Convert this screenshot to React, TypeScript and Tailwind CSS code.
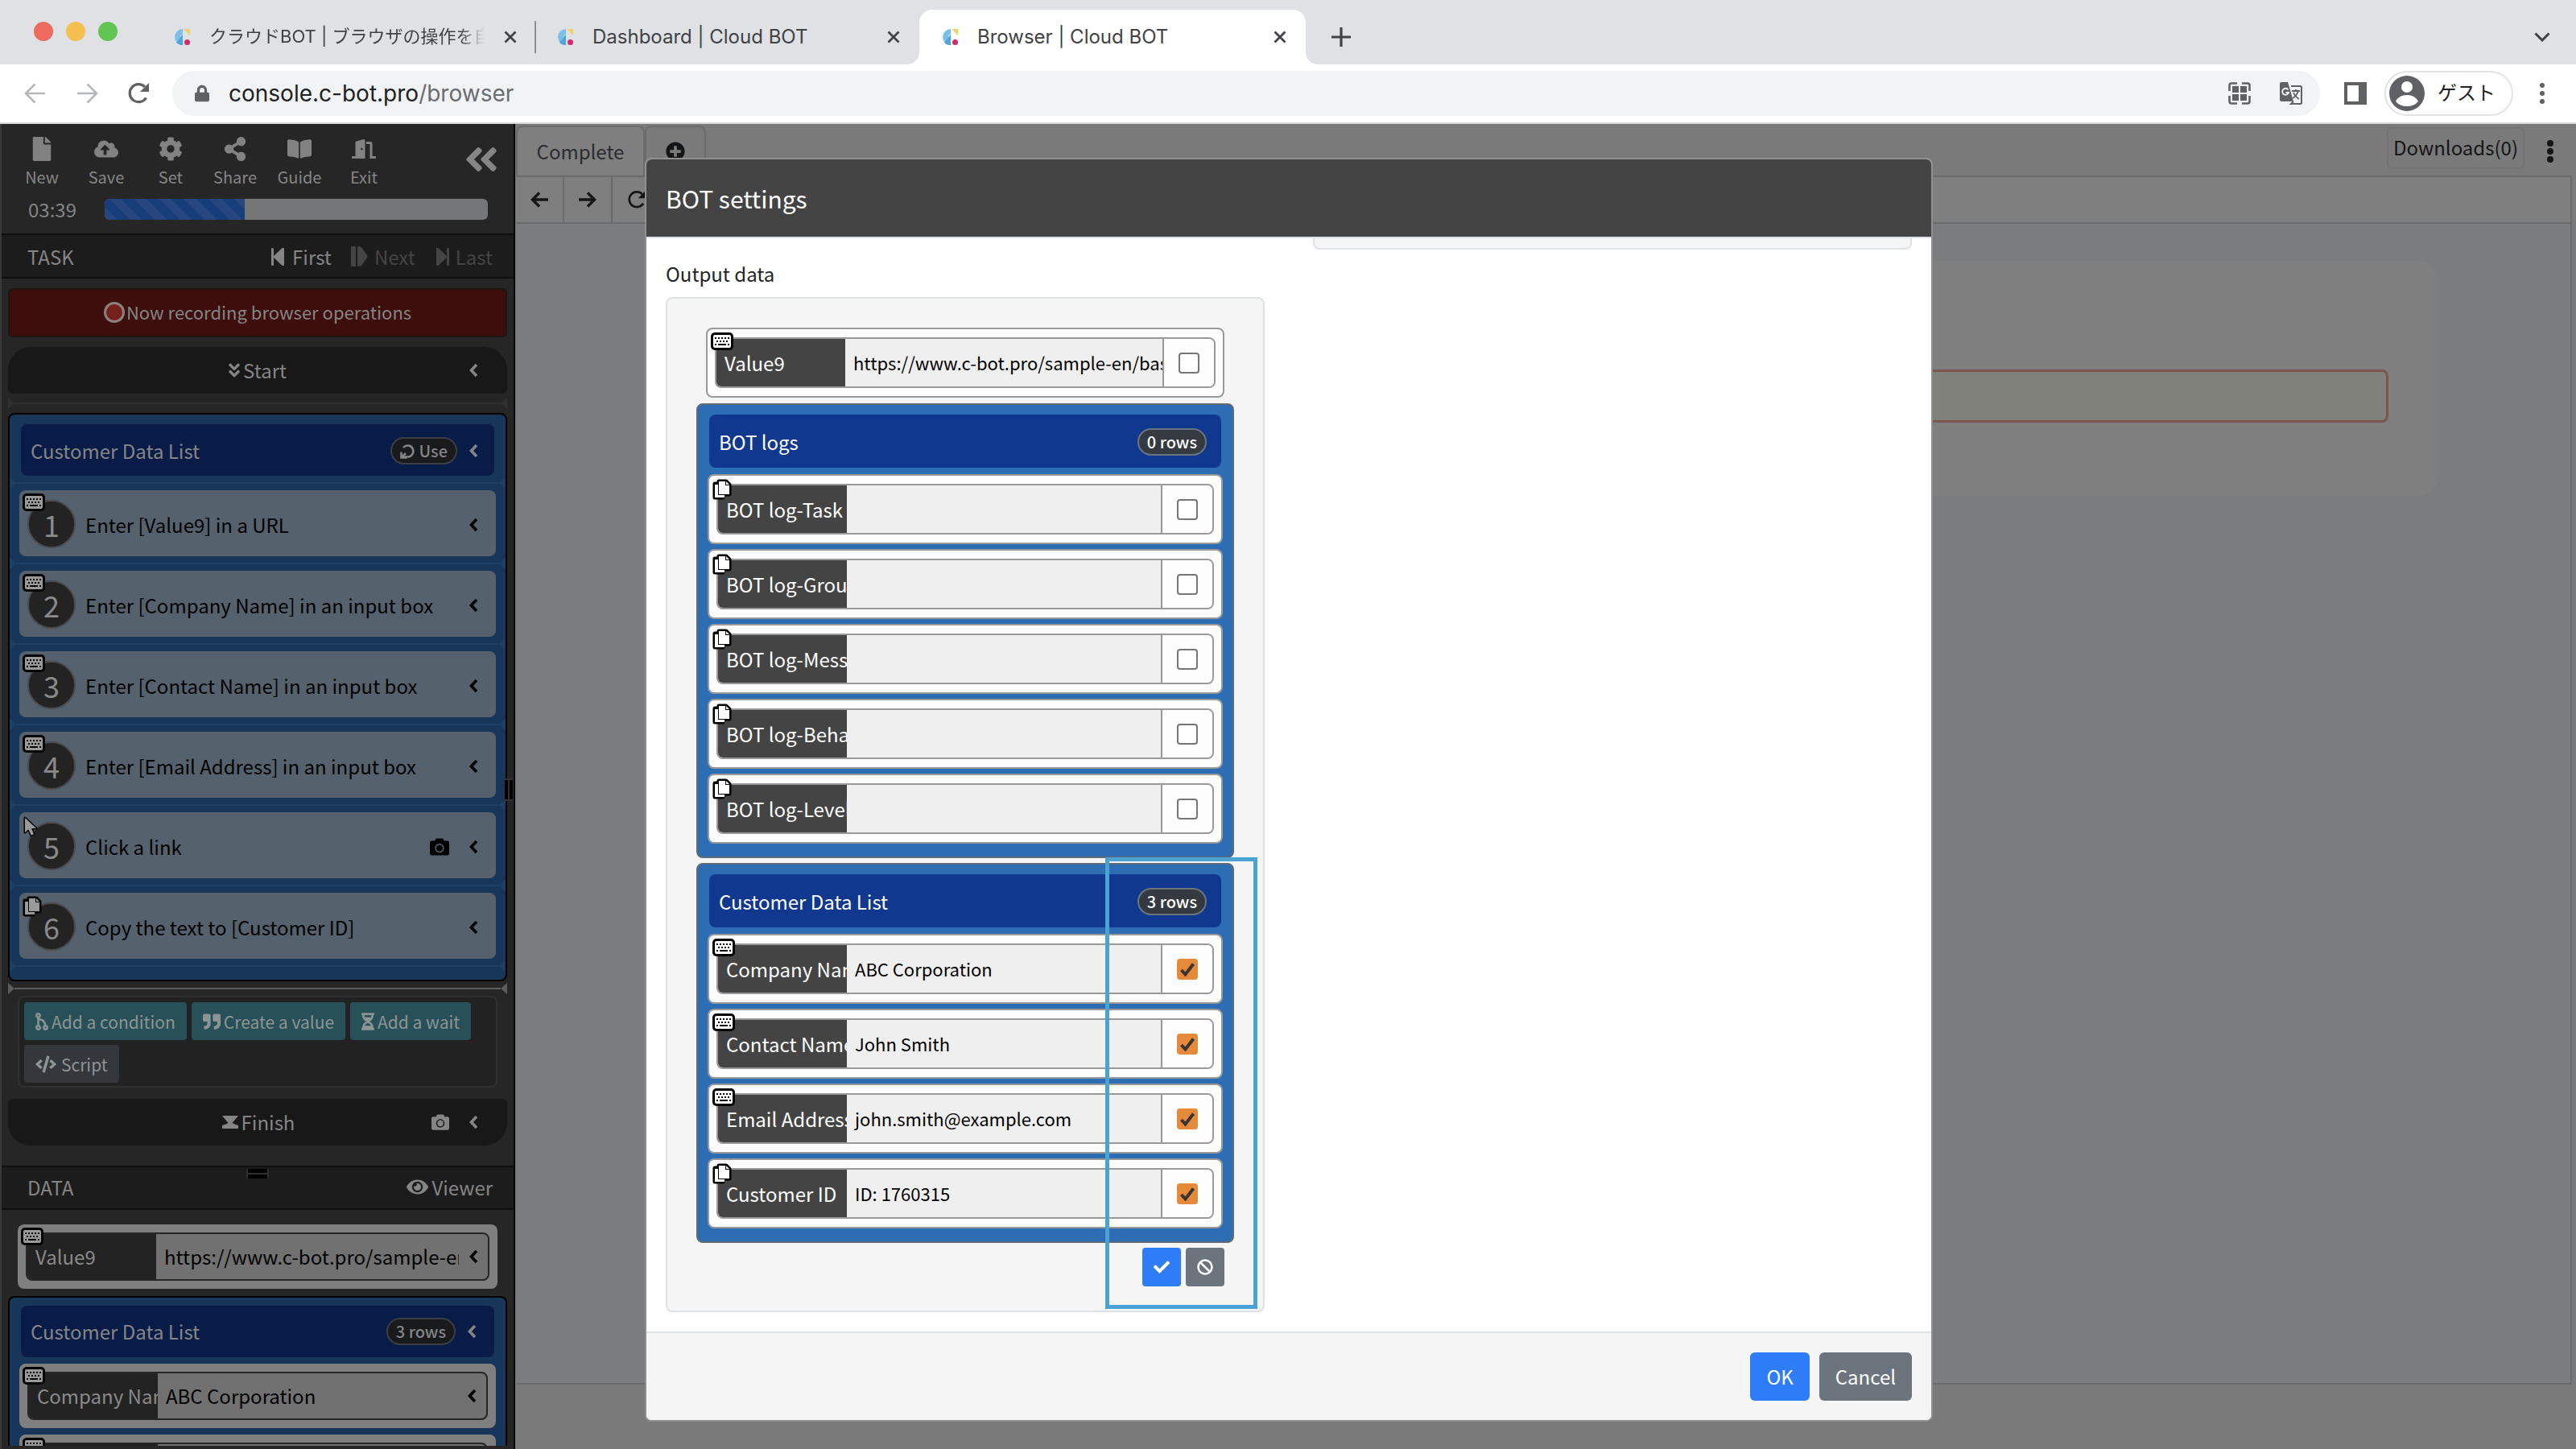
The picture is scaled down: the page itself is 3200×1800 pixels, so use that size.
import React from "react";
import {
  FaAngleDoubleDown,
  FaAngleDoubleLeft,
  FaBan,
  FaBookOpen,
  FaCamera,
  FaCheck,
  FaCloudUploadAlt,
  FaCode,
  FaCog,
  FaDoorOpen,
  FaEye,
  FaFile,
  FaHourglassHalf,
  FaLock,
  FaPlusCircle,
  FaQuoteRight,
  FaShareAlt,
} from "react-icons/fa";

/* ---------- Small drawings ---------- */

function Favicon() {
  return (
    <svg viewBox="0 0 20 20" className="size-5 shrink-0" aria-hidden="true">
      <path d="M11 0A10 10 0 0 0 11 20V13.5A3.6 3.6 0 0 1 11 6.5Z" fill="#7cc0e8" />
      <path d="M11 6.5L3 17A10 10 0 0 0 11 20Z" fill="#4fa5dc" />
      <path d="M12 0H20V8Z" fill="#f3cf6b" />
      <circle cx="16.5" cy="16.5" r="3.5" fill="#d42a6b" />
    </svg>
  );
}

function CloseIcon() {
  return (
    <svg viewBox="0 0 16 16" className="size-4" aria-hidden="true">
      <path d="M1.5 1.5L14.5 14.5M14.5 1.5L1.5 14.5" stroke="#414246" strokeWidth="2.8" fill="none" />
    </svg>
  );
}

function KeyboardIcon() {
  return (
    <svg viewBox="0 0 28 22" className="h-[22px] w-7" aria-hidden="true">
      <rect x="0" y="0" width="28" height="22" rx="5" fill="#000" />
      <rect x="3" y="3" width="22" height="16" rx="2" fill="currentColor" />
      <g fill="#000">
        <path d="M5 6h2v2H5zM9 6h2v2H9zM13 6h2v2h-2zM17 6h2v2h-2zM21 6h2v2h-2z" />
        <path d="M7 10h2v2H7zM11 10h2v2h-2zM15 10h2v2h-2zM19 10h2v2h-2z" />
        <path d="M5 14h2v2H5zM9 14h10v2H9zM21 14h2v2h-2z" />
      </g>
    </svg>
  );
}

function CopyIcon() {
  return (
    <svg viewBox="0 0 24 26" className="h-[26px] w-6" aria-hidden="true">
      <path d="M3 6h10v17H3z" fill="#000" stroke="#000" strokeWidth="5" strokeLinejoin="round" />
      <path d="M8 3h9l4 4v12H8z" fill="#000" stroke="#000" strokeWidth="5" strokeLinejoin="round" />
      <path d="M3 7h4v13h8v3H3z" fill="currentColor" />
      <path d="M8 3h8v5h5v11H8z" fill="currentColor" />
      <path d="M17 3l4 4h-4z" fill="currentColor" />
    </svg>
  );
}

function PointerIcon() {
  return (
    <svg viewBox="0 0 20 28" className="h-7 w-5" aria-hidden="true">
      <path
        d="M3 3V21L7.4 17.2L10.6 24.6L14 23.2L11 16H17Z"
        fill="currentColor"
        stroke="#000"
        strokeWidth="3"
        paintOrder="stroke"
        strokeLinejoin="round"
      />
    </svg>
  );
}

function Chevron() {
  return (
    <svg viewBox="0 0 12 18" className="h-[18px] w-3 shrink-0" aria-hidden="true">
      <path d="M10 2L3.5 9L10 16" fill="none" stroke="currentColor" strokeWidth="3.6" />
    </svg>
  );
}

function SkipIcon({ className }: { className?: string }) {
  return (
    <svg viewBox="0 0 16 22" className={"h-[22px] w-4 " + (className ?? "")} aria-hidden="true">
      <path d="M0 1Q0 0 1.5 0T3 1V10L13 .5Q16-1 16 1V21Q16 23 13 21.500L3 12V21Q3 22 1.500 22T0 21Z" fill="currentColor" />
    </svg>
  );
}

function NextIcon() {
  return (
    <svg viewBox="0 0 21 26" className="h-[26px] w-[21px]" aria-hidden="true">
      <rect x="0" y="0" width="6" height="25" rx="1" fill="currentColor" />
      <path d="M8 1Q8 0 10 0L13 1L20 11Q21 12.500 20 14L13 24L10 25Q8 25 8 24Z" fill="currentColor" />
    </svg>
  );
}

function BranchIcon() {
  return (
    <svg viewBox="0 0 16 22" className="h-[22px] w-4" fill="none" stroke="currentColor" strokeWidth="2.4" aria-hidden="true">
      <circle cx="3.500" cy="3.500" r="2.200" />
      <circle cx="3.500" cy="18.500" r="2.200" />
      <circle cx="12.500" cy="18.500" r="2.200" />
      <path d="M3.500 6V16M3.500 8Q11 8 12.500 16" />
    </svg>
  );
}

function LoopIcon() {
  return (
    <svg viewBox="0 0 20 20" className="size-5" fill="none" stroke="currentColor" strokeWidth="2.600" aria-hidden="true">
      <path d="M4 6A7 7 0 1 1 9 17.500H3" />
      <path d="M1.500 11.500V18.500H8.500M1.500 18.500L7 13" />
    </svg>
  );
}

function ArrowIcon({ flip }: { flip?: boolean }) {
  return (
    <svg viewBox="0 0 22 20" className={flip ? "h-5 w-[22px] rotate-180" : "h-5 w-[22px]"} aria-hidden="true">
      <path d="M11 1.500L2.500 10L11 18.500M2.500 10H22" fill="none" stroke="currentColor" strokeWidth="3.400" />
    </svg>
  );
}

function ThinArrow({ flip }: { flip?: boolean }) {
  return (
    <svg viewBox="0 0 26 26" className={flip ? "size-[26px] rotate-180" : "size-[26px]"} aria-hidden="true">
      <path d="M13.500 1.500L2 13L13.500 24.500M2 13H26" fill="none" stroke="#b5b7ba" strokeWidth="2.600" />
    </svg>
  );
}

function ReloadIcon({ className }: { className: string }) {
  return (
    <svg viewBox="0 0 28 28" className={className} aria-hidden="true">
      <path d="M23.500 19.500A11 11 0 1 1 22 6" fill="none" stroke="currentColor" strokeWidth="3.200" />
      <path d="M27 1V12H16Z" fill="currentColor" />
    </svg>
  );
}

function TypeBadge({ kind }: { kind: Kind }) {
  if (kind === "copy") return <CopyIcon />;
  if (kind === "click") return <PointerIcon />;
  return <KeyboardIcon />;
}

type Kind = "key" | "copy" | "click";

/* ---------- Browser chrome ---------- */

function Tab({ title, active, fade, divider }: { title: string; active?: boolean; fade?: boolean; divider?: boolean }) {
  return (
    <div
      className={
        active
          ? "relative flex h-[68px] w-[480px] items-center gap-6 rounded-t-2xl bg-white pl-7 pr-6"
          : "relative flex h-[68px] w-[476px] items-center gap-6 pl-[26px] pr-6"
      }
    >
      {active && (
        <>
          <span className="absolute -left-4 bottom-0 size-4 bg-[radial-gradient(circle_at_0_0,transparent_16px,white_16px)]" />
          <span className="absolute -right-4 bottom-0 size-4 bg-[radial-gradient(circle_at_100%_0,transparent_16px,white_16px)]" />
        </>
      )}
      <Favicon />
      <span
        className={
          fade
            ? "flex-1 overflow-hidden text-[22px] whitespace-nowrap [mask-image:linear-gradient(90deg,black_91%,transparent)]"
            : "flex-1 overflow-hidden whitespace-nowrap"
        }
      >
        {title}
      </span>
      <button aria-label={"Close " + title}>
        <CloseIcon />
      </button>
      {divider && <span className="absolute right-0 h-10 w-0.5 bg-[#8b8d91]" />}
    </div>
  );
}

function BrowserChrome() {
  return (
    <header className="shrink-0 border-b-2 border-[#d9d9d9] font-[Inter,'Noto_Sans_CJK_JP',sans-serif] text-2xl text-[#414246]">
      <div className="flex h-20 items-end bg-[#dfe1e5]">
        <div className="mr-[44px] ml-[42px] flex h-[82px] items-center gap-4">
          <span className="size-6 rounded-full bg-[#ed6a5e]" />
          <span className="size-6 rounded-full bg-[#f5bf4f]" />
          <span className="size-6 rounded-full bg-[#61c554]" />
        </div>
        <Tab title="クラウドBOT | ブラウザの操作を自動化" fade divider />
        <Tab title="Dashboard | Cloud BOT" />
        <Tab title="Browser | Cloud BOT" active />
        <button aria-label="New tab" className="ml-8 flex h-[68px] items-center">
          <svg viewBox="0 0 24 24" className="size-6">
            <path d="M12 0V24M0 12H24" stroke="#414246" strokeWidth="3.200" />
          </svg>
        </button>
        <button aria-label="Search tabs" className="mr-8 ml-auto flex h-[68px] items-center">
          <svg viewBox="0 0 20 12" className="h-3 w-5">
            <path d="M1.500 1.500L10 10L18.500 1.500" fill="none" stroke="#414246" strokeWidth="3" />
          </svg>
        </button>
      </div>
      <div className="flex h-[72px] items-center bg-white pr-[39px] pl-[30px] text-[#5f6165]">
        <button aria-label="Back">
          <ThinArrow />
        </button>
        <button aria-label="Forward" className="ml-10">
          <ThinArrow flip />
        </button>
        <button aria-label="Reload" className="ml-9">
          <ReloadIcon className="size-7" />
        </button>
        <div className="ml-7 flex h-14 flex-1 items-center rounded-full bg-[#f1f3f5] pr-[22px] pl-7">
          <FaLock className="h-[22px] w-[18px]" />
          <span className="ml-6 pt-0.5 text-[28px] text-[#6a6c70]">
            <span className="text-[#202124]">console.c-bot.pro</span>/browser
          </span>
          <button aria-label="QR code" className="ml-auto">
            <svg viewBox="0 0 28 28" className="size-7">
              <path
                d="M1.500 11V4Q1.500 1.500 4 1.500H11M17 1.500H24Q26.500 1.500 26.500 4V11M26.500 17V24Q26.500 26.500 24 26.500H17M11 26.500H4Q1.500 26.500 1.500 24V17"
                fill="none"
                stroke="currentColor"
                strokeWidth="2.600"
              />
              <path d="M5 5h8v8H5zM15 5h8v8h-8zM5 15h8v8H5zM15 15h8v8h-8z" fill="currentColor" />
            </svg>
          </button>
          <button aria-label="Translate this page" className="ml-9">
            <svg viewBox="0 0 28 28" className="size-7">
              <path d="M14 5H25.500Q27 5 27 6.500V25.500Q27 27 25.500 27H14L17 24" fill="none" stroke="currentColor" strokeWidth="2" />
              <path d="M2 0H10L17 24H2Q0 24 0 22V2Q0 0 2 0Z" fill="currentColor" />
              <path d="M10.500 9.500A4 4 0 1 0 11 13H7.500" fill="none" stroke="#f1f3f5" strokeWidth="1.800" />
              <path d="M15 11H25M20 9V11M23 11Q21 17 16 20M17 13Q19 18 24 21" fill="none" stroke="currentColor" strokeWidth="1.800" />
            </svg>
          </button>
        </div>
        <button aria-label="Side panel" className="ml-[30px]">
          <svg viewBox="0 0 28 28" className="size-7">
            <path d="M0 0H28V28H0ZM4 4V24H18V4Z" fill="currentColor" fillRule="evenodd" />
          </svg>
        </button>
        <button className="ml-[22px] flex h-14 w-40 items-center gap-4 rounded-full border-2 border-[#e2e3e5] pl-1 text-2xl text-[#202124]">
          <svg viewBox="0 0 44 44" className="size-11">
            <circle cx="22" cy="22" r="22" fill="#5f6165" />
            <circle cx="22" cy="14" r="7" fill="#fff" />
            <path d="M8 32Q12 24 22 24T36 32Q31 38 22 38T8 32Z" fill="#fff" />
          </svg>
          ゲスト
        </button>
        <button aria-label="Menu" className="ml-[33px]">
          <svg viewBox="0 0 6 28" className="h-7 w-1.5" fill="currentColor">
            <circle cx="3" cy="4" r="3" />
            <circle cx="3" cy="14" r="3" />
            <circle cx="3" cy="24" r="3" />
          </svg>
        </button>
      </div>
    </header>
  );
}

/* ---------- Sidebar ---------- */

const tools = [
  { label: "New", icon: FaFile },
  { label: "Save", icon: FaCloudUploadAlt },
  { label: "Set", icon: FaCog },
  { label: "Share", icon: FaShareAlt },
  { label: "Guide", icon: FaBookOpen },
  { label: "Exit", icon: FaDoorOpen },
];

const steps: { text: string; kind: Kind; camera?: boolean }[] = [
  { text: "Enter [Value9] in a URL", kind: "key" },
  { text: "Enter [Company Name] in an input box", kind: "key" },
  { text: "Enter [Contact Name] in an input box", kind: "key" },
  { text: "Enter [Email Address] in an input box", kind: "key" },
  { text: "Click a link", kind: "click", camera: true },
  { text: "Copy the text to [Customer ID]", kind: "copy" },
];

function DropLine({ className }: { className: string }) {
  return (
    <div className={"flex items-center " + className} aria-hidden="true">
      <span className="h-3.5 w-2 bg-current [clip-path:polygon(0_0,100%_50%,0_100%)]" />
      <span className="h-0.5 flex-1 bg-current" />
      <span className="h-3.5 w-2 bg-current [clip-path:polygon(100%_0,0_50%,100%_100%)]" />
    </div>
  );
}

function SideValue({ name, value, kind }: { name: string; value: string; kind: Kind }) {
  return (
    <div className="relative h-20 shrink-0 rounded-lg bg-[#7f7f7f] p-2.5">
      <div className="flex h-full overflow-hidden rounded-lg border-2 border-[#262626] bg-[#717171] text-black">
        <span className="flex w-40 shrink-0 items-center overflow-hidden bg-[#232323] pl-2.5 whitespace-nowrap text-[#8a8a8a]">
          {name}
        </span>
        <span className="ml-2.5 flex flex-1 items-center overflow-hidden whitespace-nowrap">{value}</span>
        <button aria-label={"Expand " + name} className="px-3">
          <Chevron />
        </button>
      </div>
      <span className="absolute top-1 left-1 text-[#9a9a9a]">
        <TypeBadge kind={kind} />
      </span>
    </div>
  );
}

function Sidebar() {
  return (
    <aside className="relative flex w-[640px] shrink-0 flex-col overflow-hidden border-r-2 border-l-2 border-r-black border-l-[#383838] bg-[#262626] text-[#858585]">
      <div className="flex h-[138px] shrink-0 flex-col border-b-2 border-[#0f0f0f] pt-4">
        <div className="flex items-start pl-2.5">
          {tools.map(({ label, icon: Icon }) => (
            <button key={label} className="flex w-20 flex-col items-center gap-2 text-xl leading-6">
              <Icon className="size-[30px] text-[#828282]" />
              {label}
            </button>
          ))}
          <button aria-label="Collapse sidebar" className="mt-1 mr-4 ml-auto">
            <FaAngleDoubleLeft className="size-12" />
          </button>
        </div>
        <div className="mt-3.5 mr-8 flex items-center pl-[33px]">
          <span className="w-[95px] leading-7">03:39</span>
          <div
            role="progressbar"
            aria-label="Session time"
            aria-valuenow={37}
            className="flex h-[26px] flex-1 overflow-hidden rounded-md bg-[#757678]"
          >
            <div
              className="bg-[repeating-linear-gradient(45deg,#27457f_0_11px,#173d7a_11px_22px)]"
              style={{ width: "36.5%" }}
            />
          </div>
        </div>
      </div>

      <div className="flex h-[54px] shrink-0 items-center border-b-2 border-[#0f0f0f] bg-[#1c1c1c] pt-0.5 pr-[26px] pl-8">
        <h2 className="mr-auto">TASK</h2>
        <button className="flex items-center gap-2.5">
          <SkipIcon />
          First
        </button>
        <button className="ml-6 flex items-center gap-2 text-[#444]">
          <NextIcon />
          Next
        </button>
        <button className="ml-[26px] flex items-center gap-2 text-[#444]">
          <SkipIcon className="rotate-180" />
          Last
        </button>
      </div>

      <div className="mx-2 mt-3 flex h-[61px] shrink-0 items-center justify-center gap-0.5 rounded-md border-2 border-[#1f1413] bg-[#3d0e0c] pb-0.5 text-[22px]">
        <span className="size-[26px] rounded-full border-[3px] border-[#8a8080] bg-[#75201a]" />
        Now recording browser operations
      </div>

      <div className="mx-2 mt-3 flex h-[58px] shrink-0 items-center rounded-t-[28px] rounded-b-md bg-[#181818] pr-9 pl-12">
        <span className="flex flex-1 items-center justify-center gap-1">
          <FaAngleDoubleDown className="h-[22px] w-3.5" />
          Start
        </span>
        <button aria-label="Expand Start">
          <Chevron />
        </button>
      </div>

      <DropLine className="mx-2 h-6 shrink-0 text-[#303030]" />

      <section className="mx-2 shrink-0 rounded-lg border-2 border-black bg-[#18365a] pt-3 pb-2">
        <div className="mx-3.5 flex h-16 items-center rounded-lg bg-[#091c47] pt-0.5 pr-5 pl-3">
          <h3 className="mr-auto">Customer Data List</h3>
          <button className="mr-[14px] flex h-[34px] items-center gap-1 rounded-full border-2 border-[#3b3f43] bg-[#181a1c] px-2.5 text-xl font-medium">
            <LoopIcon />
            Use
          </button>
          <button aria-label="Expand Customer Data List">
            <Chevron />
          </button>
        </div>
        <DropLine className="h-[18px] text-[#1e3f66]" />
        <ol>
          {steps.map((step, i) => (
            <li key={step.text}>
              <div className="relative mx-3 flex h-[82px] items-center rounded-lg bg-[#55616d] pt-1 pr-[22px] pl-2.5 text-black">
                <span className="mt-2 flex size-[60px] items-center justify-center self-start rounded-full border-2 border-[#4a4a4c] bg-[#232323] text-4xl text-[#8a8a8a]">
                  {i + 1}
                </span>
                <span className="ml-3 flex-1">{step.text}</span>
                {step.camera && <FaCamera className="mr-6 size-6" />}
                <button aria-label={"Expand step " + (i + 1)}>
                  <Chevron />
                </button>
                <span className="absolute top-1 left-1 text-[#9a9a9a]">
                  <TypeBadge kind={step.kind} />
                </span>
              </div>
              <DropLine className="h-[18px] text-[#1e3f66]" />
            </li>
          ))}
        </ol>
      </section>

      <DropLine className="mx-2 h-[18px] shrink-0 text-[#5c5c5c]" />

      <div className="mx-5 flex shrink-0 flex-wrap gap-1.5 rounded-lg border-2 border-[#303030] bg-[#222] px-1.5 pt-1.5 pb-1 text-[21px] text-[#8d9494]">
        <button className="flex h-[47px] items-center gap-1 rounded bg-[#275058] px-3.5">
          <BranchIcon />
          Add a condition
        </button>
        <button className="flex h-[47px] items-center gap-1 rounded bg-[#275058] px-3.5">
          <FaQuoteRight className="size-[22px]" />
          Create a value
        </button>
        <button className="flex h-[47px] items-center gap-1 rounded bg-[#275058] px-3.5">
          <FaHourglassHalf className="h-[22px] w-4" />
          Add a wait
        </button>
        <button className="flex h-[47px] items-center gap-1.5 rounded bg-[#34383c] px-3.5">
          <FaCode className="size-[26px]" />
          Script
        </button>
      </div>

      <div className="mx-2 mt-3.5 flex h-[58px] shrink-0 items-center rounded-t-md rounded-b-[28px] bg-[#181818] pr-9 pl-24">
        <span className="flex flex-1 items-center justify-center gap-1">
          <svg viewBox="0 0 20 16" className="h-4 w-5" fill="currentColor">
            <path d="M0 0H20L12.500 9Q16 11 20 12V16H0V12Q4 11 7.500 9Z" />
          </svg>
          Finish
        </span>
        <FaCamera className="mr-6 size-[22px]" />
        <button aria-label="Expand Finish">
          <Chevron />
        </button>
      </div>

      <div className="relative mt-[25px] flex h-[55px] shrink-0 items-center border-y-2 border-[#0f0f0f] bg-[#1c1c1c] pr-[26px] pb-0.5 pl-8">
        <h2 className="mr-auto">DATA</h2>
        <button className="flex items-center gap-1">
          <FaEye className="size-[27px]" />
          Viewer
        </button>
        <span className="absolute top-0.5 left-1/2 flex h-3 w-7 -translate-x-1/2 flex-col justify-between border-x-2 border-[#303030] bg-[#303030]">
          <span className="h-[5px] bg-black" />
          <span className="h-[5px] bg-black" />
        </span>
      </div>

      <div className="mx-5 mt-[18px] shrink-0">
        <SideValue name="Value9" value="https://www.c-bot.pro/sample-en/basic" kind="key" />
      </div>
      <section className="mx-2 mt-[9px] flex shrink-0 flex-col gap-2 rounded-t-lg border-2 border-b-0 border-black bg-[#18365a] px-3 pt-2.5">
        <div className="mx-0.5 flex h-16 items-center rounded-lg bg-[#091c47] pr-[22px] pl-3">
          <h3 className="mr-auto">Customer Data List</h3>
          <span className="mr-[14px] flex h-[34px] items-center rounded-full border-2 border-[#3b3f43] bg-[#181a1c] px-2.5 text-xl font-medium">
            3 rows
          </span>
          <button aria-label="Expand Customer Data List values">
            <Chevron />
          </button>
        </div>
        <SideValue name="Company Name" value="ABC Corporation" kind="key" />
        <SideValue name="Contact Name" value="John Smith" kind="key" />
      </section>
      <div className="absolute inset-x-0 bottom-0 h-1 bg-[#262626]" />
      <div className="absolute top-[813px] right-0 flex h-7 w-3 justify-between border-y-2 border-[#303030] bg-[#303030] px-px">
        <span className="w-1 bg-black" />
        <span className="w-1 bg-black" />
      </div>
    </aside>
  );
}

/* ---------- Page preview behind the dialog ---------- */

function Preview() {
  return (
    <main className="flex flex-1 flex-col bg-[#7a7a7a] pl-px text-[#141516]">
      <div className="flex h-16 shrink-0 items-end">
        <button className="h-[62px] w-40 rounded-t-lg border-2 border-b-0 border-[#6c6c6d] bg-[#7f7f7f] text-[#2b2c2e]">
          Complete
        </button>
        <button
          aria-label="Add tab"
          className="flex h-[62px] w-[76px] items-center justify-center rounded-t-lg border-2 border-b-0 border-[#6c6c6d]"
        >
          <FaPlusCircle className="size-6" />
        </button>
        <button className="mb-2 ml-auto h-[52px] rounded-md border-2 border-[#707273] px-1.5 pb-0.5">Downloads(0)</button>
        <button aria-label="More" className="mr-7 mb-4 ml-7">
          <svg viewBox="0 0 8 28" className="h-7 w-2" fill="currentColor">
            <circle cx="4" cy="4" r="4" />
            <circle cx="4" cy="14" r="4" />
            <circle cx="4" cy="24" r="4" />
          </svg>
        </button>
      </div>
      <div className="mr-[5px] mb-20 flex flex-1 flex-col border-t-2 border-r-2 border-b-2 border-[#6a6b6c] bg-[#7b7c7e]">
        <div className="flex h-[58px] shrink-0 border-b-2 border-[#6a6b6c] bg-[#7f7f7f]">
          <button aria-label="Page back" className="flex w-[60px] items-center justify-center border-r-2 border-[#6a6b6c]">
            <ArrowIcon />
          </button>
          <button aria-label="Page forward" className="flex w-[60px] items-center justify-center border-r-2 border-[#6a6b6c]">
            <ArrowIcon flip />
          </button>
          <button aria-label="Reload page" className="flex w-[60px] items-center justify-center">
            <ReloadIcon className="size-6" />
          </button>
        </div>
        <div className="mx-[165px] mt-[46px] flex h-[292px] flex-col rounded-3xl bg-[#7f7f7f] px-[61px] pt-[135px]">
          <input
            aria-label="Email"
            className="h-[66px] w-full rounded-lg border-[3px] border-[#7a564d] bg-[#7f817a] outline-none"
          />
        </div>
      </div>
    </main>
  );
}

/* ---------- Dialog ---------- */

function OutputRow({ name, value, kind, checked }: { name: string; value?: string; kind: Kind; checked?: boolean }) {
  return (
    <label className="relative block rounded-lg border-2 border-[#999] bg-[#fdfdfd] px-[9px] py-2.5">
      <span className="flex h-[63px] overflow-hidden rounded-lg border-2 border-[#999] bg-[#efefef]">
        <span className="flex w-40 shrink-0 items-center overflow-hidden bg-[#444] pl-2.5 whitespace-nowrap text-white">
          {name}
        </span>
        <span className="flex flex-1 items-center overflow-hidden pl-2.5 text-[22px] whitespace-nowrap text-black">
          {value}
        </span>
        <span className="relative flex w-16 shrink-0 items-center justify-center border-l-2 border-[#999] bg-[#fdfdfd]">
          <input
            type="checkbox"
            defaultChecked={checked}
            className="peer size-[26px] appearance-none rounded border-2 border-[#767676] bg-white checked:border-[#e5893a] checked:bg-[#e5893a]"
          />
          <svg
            viewBox="0 0 20 20"
            className="pointer-events-none absolute hidden size-5 peer-checked:block"
            aria-hidden="true"
          >
            <path d="M2.500 11L7.500 16.500L17.500 3.500" fill="none" stroke="#3a3530" strokeWidth="4" />
          </svg>
        </span>
      </span>
      <span className="absolute top-1 left-1 text-white">
        <TypeBadge kind={kind} />
      </span>
    </label>
  );
}

function OutputGroup({ title, rows, children }: { title: string; rows: string; children: React.ReactNode }) {
  return (
    <section className="flex flex-col gap-1.5 rounded-lg border-2 border-[#606a75] bg-[#2c6db4] px-3 pt-3 pb-4">
      <div className="mx-0.5 mb-0.5 flex h-[66px] items-center justify-between rounded-lg bg-[#11388f] pt-0.5 pr-[18px] pl-3 text-white">
        <h3>{title}</h3>
        <span className="flex h-[34px] items-center rounded-full border-2 border-[#6c757d] bg-[#343a40] px-2.5 text-xl font-medium">
          {rows}
        </span>
      </div>
      {children}
    </section>
  );
}

function SettingsDialog() {
  return (
    <div className="absolute inset-x-0 top-[196px] flex justify-center pl-0.5">
      <div
        role="dialog"
        aria-label="BOT settings"
        className="flex w-[1600px] max-w-full flex-col overflow-hidden rounded-lg border-2 border-[#909090] bg-white text-[#212529]"
      >
        <div className="border-b-2 border-[#dee2e6] bg-[#444] px-6 py-7">
          <h1 className="text-[30px] leading-10 text-white">BOT settings</h1>
        </div>
        <div className="grid grid-cols-2 items-start gap-[60px] px-6 pb-6">
          <div className="pt-[26px]">
            <h2 className="leading-9">Output data</h2>
            <div className="mt-[11px] rounded-lg border-2 border-[#dee2e6] bg-[#f5f5f5] px-9 pt-9 pb-[30px]">
              <div className="mb-[7px] px-3">
                <OutputRow name="Value9" value="https://www.c-bot.pro/sample-en/basic" kind="key" />
              </div>
              <OutputGroup title="BOT logs" rows="0 rows">
                <OutputRow name="BOT log-Task" kind="copy" />
                <OutputRow name="BOT log-Group" kind="copy" />
                <OutputRow name="BOT log-Message" kind="copy" />
                <OutputRow name="BOT log-Behavior" kind="copy" />
                <OutputRow name="BOT log-Level" kind="copy" />
              </OutputGroup>
              <div className="relative mt-1.5">
                <OutputGroup title="Customer Data List" rows="3 rows">
                  <OutputRow name="Company Name" value="ABC Corporation" kind="key" checked />
                  <OutputRow name="Contact Name" value="John Smith" kind="key" checked />
                  <OutputRow name="Email Address" value="john.smith@example.com" kind="key" checked />
                  <OutputRow name="Customer ID" value="ID: 1760315" kind="copy" checked />
                </OutputGroup>
                <div className="mt-1.5 mr-3 flex justify-end gap-1.5 text-white">
                  <button aria-label="Select all" className="flex size-12 items-center justify-center rounded bg-[#2f7cf8]">
                    <FaCheck className="size-5" />
                  </button>
                  <button aria-label="Clear all" className="flex size-12 items-center justify-center rounded bg-[#6c757d]">
                    <FaBan className="size-5" />
                  </button>
                </div>
                <div className="pointer-events-none absolute -top-[7px] -right-[29px] -bottom-[28px] w-[189px] border-[5px] border-[#4ba3d3]" />
              </div>
            </div>
          </div>
          <div className="h-3.5 rounded-b-lg border-2 border-t-0 border-[#dee2e6] bg-[#f5f5f5]" />
        </div>
        <div className="flex justify-end gap-3 border-t-2 border-[#dee2e6] bg-[#f5f5f5] p-6 text-white">
          <button className="h-[60px] rounded-md bg-[#2f7cf8] px-5">OK</button>
          <button className="h-[60px] rounded-md bg-[#6c757d] px-5">Cancel</button>
        </div>
      </div>
    </div>
  );
}

export default function App() {
  return (
    <div className="relative flex h-screen flex-col overflow-hidden font-['Noto_Sans_CJK_JP',sans-serif] text-2xl">
      <BrowserChrome />
      <div className="flex min-h-0 flex-1">
        <Sidebar />
        <Preview />
      </div>
      <SettingsDialog />
    </div>
  );
}
